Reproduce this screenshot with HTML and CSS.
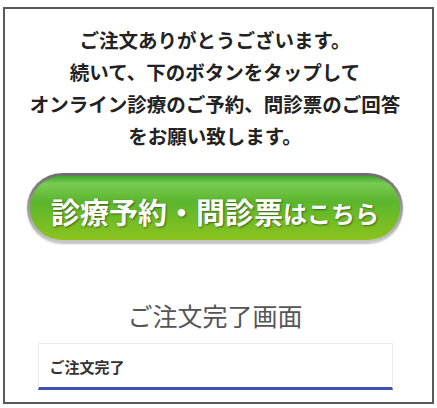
FILE: index.html
```html
<!DOCTYPE html>
<html lang="ja">
<head>
<meta charset="utf-8">
<link rel="stylesheet" href="styles.css">
</head>
<body>
<div class="frame">
  <p class="lead">ご注文ありがとうございます。<br>続いて、下のボタンをタップして<br>オンライン診療のご予約、問診票のご回答<br>をお願い致します。</p>
  <a class="btn" href="#"><span class="btn-inner"><span class="big">診療予約・問診票</span><span class="small">はこちら</span></span></a>
  <h2 class="title">ご注文完了画面</h2>
  <div class="tab"><span class="tab-label">ご注文完了</span></div>
</div>
</body>
</html>
```
FILE: styles.css
```css
html, body {
  margin: 0;
  padding: 0;
  background: #ffffff;
}
body {
  padding: 7px 0 0 3px;
  font-family: "Noto Sans CJK JP", "Noto Sans", sans-serif;
}
.frame {
  width: 427px;
  height: 393px;
  border: 2px solid #5a5a5a;
  box-sizing: content-box;
  padding: 15px 7px 0 0;
  box-sizing: border-box;
  height: 397px;
  width: 431px;
  display: flex;
  flex-direction: column;
  align-items: center;
}
.lead {
  margin: 0;
  font-size: 19.5px;
  line-height: 32px;
  font-weight: 700;
  color: #222;
  text-align: center;
  letter-spacing: 0;
}
.btn {
  display: block;
  margin-top: 21px;
  width: 376px;
  height: 70px;
  box-sizing: border-box;
  padding: 3px;
  border-radius: 35px;
  background: linear-gradient(to bottom, #6e6e6e 0%, #9a9a9a 50%, #c8c8c8 100%);
  text-decoration: none;
  box-shadow: 0 1px 2px rgba(0,0,0,0.25);
}
.btn-inner {
  display: flex;
  align-items: center;
  justify-content: center;
  height: 100%;
  border-radius: 32px;
  background: linear-gradient(to bottom, #3ca82a 0%, #7acb52 12%, #5cb52e 40%, #6fbb26 65%, #8cc31e 100%);
  color: #fff;
  font-weight: 700;
  text-shadow: 1px 1px 2px rgba(0,0,0,0.45);
  padding-top: 6px;
  box-sizing: border-box;
}
.big {
  font-size: 29px;
  letter-spacing: 0;
}
.small {
  font-size: 24px;
  letter-spacing: 0;
  margin-top: 3px;
}
.title {
  margin: 57px 0 0;
  font-size: 25px;
  line-height: 30px;
  font-weight: 400;
  color: #555;
}
.tab {
  margin-top: 13px;
  width: 355px;
  height: 47px;
  box-sizing: border-box;
  border: 1px solid #ececec;
  border-bottom: 3px solid #3f51b5;
  display: flex;
  align-items: center;
  padding: 2px 0 0 11px;
}
.tab-label {
  font-size: 15px;
  font-weight: 700;
  color: #333;
}
```
